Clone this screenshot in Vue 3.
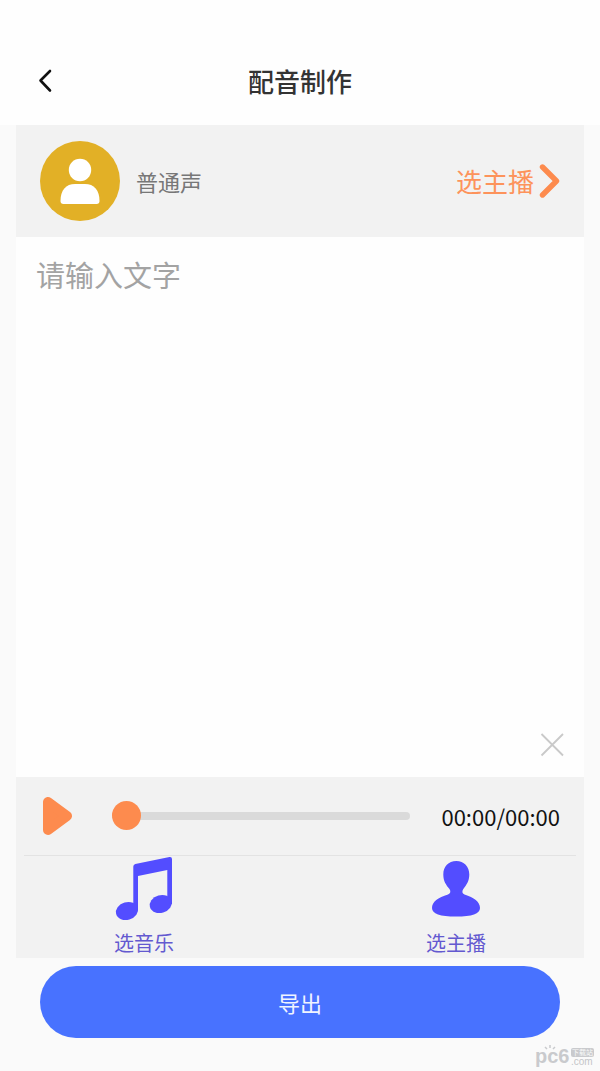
<script setup>
import { ref } from 'vue'

const text = ref('')
const position = ref(0)
</script>

<template>
  <div class="page">
    <header class="header">
      <button class="back" type="button" aria-label="返回">
        <svg width="14" height="24" viewBox="0 0 14 24">
          <path d="M12 2 2.500 11.500 12 21.500" fill="none" stroke="#111" stroke-width="2.600" stroke-linecap="round" stroke-linejoin="round" />
        </svg>
      </button>
      <h1 class="title">配音制作</h1>
    </header>

    <main class="content">
      <section class="anchor">
        <svg class="avatar" width="80" height="80" viewBox="0 0 80 80">
          <circle cx="40" cy="40" r="40" fill="#e2b026" />
          <circle cx="40" cy="29" r="11.200" fill="#fff" />
          <path d="M23.500 63Q20.500 63 20.500 60C20.500 49 26 43 35 43H45C54 43 59.500 49 59.500 60Q59.500 63 56.500 63Z" fill="#fff" />
        </svg>
        <span class="voice">普通声</span>
        <button class="pick" type="button">
          <span>选主播</span>
          <svg width="22" height="36" viewBox="0 0 22 36">
            <path d="M4.500 4 18.500 18 4.500 32" fill="none" stroke="#fd8b4e" stroke-width="5.400" stroke-linecap="round" stroke-linejoin="round" />
          </svg>
        </button>
      </section>

      <section class="editor">
        <textarea v-model="text" class="input" placeholder="请输入文字" aria-label="请输入文字"></textarea>
        <button class="clear" type="button" aria-label="清空" @click="text = ''">
          <svg width="24" height="24" viewBox="0 0 24 24">
            <path d="M1.500 1 23 22.500M23 1 1.500 22.500" stroke="#c9c9c9" stroke-width="1.800" />
          </svg>
        </button>
      </section>

      <section class="panel">
        <div class="player">
          <button class="play" type="button" aria-label="播放">
            <svg width="32" height="40" viewBox="0 0 32 40">
              <path d="M8 6V34L27 20Z" fill="#fd8b4e" stroke="#fd8b4e" stroke-width="10" stroke-linejoin="round" />
            </svg>
          </button>
          <input v-model="position" class="slider" type="range" min="0" max="100" aria-label="播放进度" />
          <span class="time">00:00/00:00</span>
        </div>
        <div class="tools">
          <button class="tool" type="button">
            <svg width="64" height="68" viewBox="0 0 64 68" fill="#534dff">
              <path d="M21.300 10.500Q21.300 8.500 23.300 8L57.500 1Q60 .700 60 3V48H55.300V14L26 20V54H21.300Z" />
              <ellipse cx="15" cy="55" rx="11.300" ry="8.800" transform="rotate(-16 15 55)" />
              <ellipse cx="48.800" cy="48" rx="11.300" ry="8.800" transform="rotate(-16 48.800 48)" />
            </svg>
            <span>选音乐</span>
          </button>
          <button class="tool" type="button">
            <svg width="64" height="68" viewBox="0 0 64 68">
              <path d="M32.300 5C40 5 45.300 10.500 45.300 18.500C45.300 25 42.500 29 39.300 33C37.800 35.500 38 37.500 40.500 38.500C50 41.300 56 46 56 52C56 58 48 60.500 32 60.500S8 58 8 52C8 46 14 41.300 24 38.500C26.500 37.500 27 35.500 25.500 33C22 29 19.300 25 19.300 18.500C19.300 10.500 24.500 5 32.300 5Z" fill="#534dff" />
            </svg>
            <span>选主播</span>
          </button>
        </div>
      </section>
    </main>

    <footer class="footer">
      <button class="export" type="button">导出</button>
    </footer>

    <div class="mark">
      <svg class="pc" width="36" height="24" viewBox="0 0 36 24">
        <text x="0" y="18">pc6</text>
        <path d="M10 2 12 4M15 0V3M20 2 18 4" stroke="#c9cacd" stroke-width="1.500" />
      </svg>
      <span class="site"><span class="badge">下载站</span><span>.com</span></span>
    </div>
  </div>
</template>

<style>
body {
  background: #fafafa;
}
</style>

<style scoped>
.page {
  position: relative;
  display: flex;
  flex-direction: column;
  min-height: 100vh;
  background: #fafafa;
  font-family: "Noto Sans CJK SC", sans-serif;
}

button {
  padding: 0;
  border: 0;
  background: none;
  font: inherit;
  color: inherit;
  cursor: pointer;
}

svg {
  display: block;
}

.header {
  display: grid;
  grid-template-columns: 1fr auto 1fr;
  align-items: center;
  padding: 36px 38px 0;
  height: 89px;
  background: #fefefe;
}

.back {
  justify-self: start;
}

.title {
  margin: 0;
  font-size: 26px;
  line-height: 36px;
  font-weight: 500;
  color: #333;
}

.content {
  display: flex;
  flex: 1;
  flex-direction: column;
  margin: 0 16px;
}

.anchor {
  display: flex;
  align-items: center;
  gap: 16px;
  padding: 16px 24px;
  background: #f2f2f2;
}

.voice {
  flex: 1;
  font-size: 22px;
  color: #777;
}

.pick {
  display: flex;
  align-items: center;
  gap: 4px;
  font-size: 26px;
  line-height: 36px;
  color: #fd935b;
}

.editor {
  position: relative;
  display: flex;
  flex: 1;
  background: #fefefe;
}

.input {
  flex: 1;
  padding: 16px 20px;
  border: 0;
  outline: 0;
  resize: none;
  background: none;
  font: inherit;
  font-size: 29px;
  line-height: 42px;
  color: #333;
}

.input::placeholder {
  color: #a3a3a3;
  opacity: 1;
}

.clear {
  position: absolute;
  right: 20px;
  bottom: 20px;
}

.panel {
  padding: 0 8px;
  background: #f2f2f2;
}

.player {
  display: flex;
  align-items: center;
  padding: 0 16px;
  height: 78px;
  border-bottom: 1px solid #e3e3e3;
}

.slider {
  flex: 1;
  min-width: 0;
  height: 30px;
  margin: 0 31px 0 40px;
  appearance: none;
  background: none;
}

.slider::-webkit-slider-runnable-track {
  height: 8px;
  border-radius: 4px;
  background: #dadada;
}

.slider::-webkit-slider-thumb {
  width: 29px;
  height: 29px;
  margin-top: -11px;
  border-radius: 50%;
  appearance: none;
  background: #fd8b4e;
}

.time {
  font-size: 22px;
  color: #111;
}

.tools {
  display: flex;
  justify-content: space-between;
  padding: 0 88px;
}

.tool {
  display: flex;
  flex-direction: column;
  align-items: center;
  gap: 4px;
  font-size: 20px;
  line-height: 30px;
  color: #6359d0;
}

.footer {
  padding: 8px 40px 33px;
}

.export {
  display: block;
  width: 100%;
  height: 72px;
  border-radius: 36px;
  background: #4872ff;
  font-size: 22px;
  color: #f0f4ff;
}

.mark {
  position: absolute;
  right: 6px;
  bottom: 2px;
  display: flex;
  align-items: center;
  color: #c4c5c8;
}

.pc text {
  font-family: "Liberation Sans", sans-serif;
  font-size: 20px;
  font-weight: 700;
  fill: #c9cacd;
}

.site {
  display: flex;
  flex-direction: column;
  font-family: "Liberation Sans", "Noto Sans CJK SC", sans-serif;
  font-size: 10px;
  line-height: 9px;
}

.badge {
  padding: 0 1px;
  border-radius: 2px;
  background: #c9cacd;
  font-size: 7px;
  line-height: 9px;
  color: #fafafa;
}
</style>
